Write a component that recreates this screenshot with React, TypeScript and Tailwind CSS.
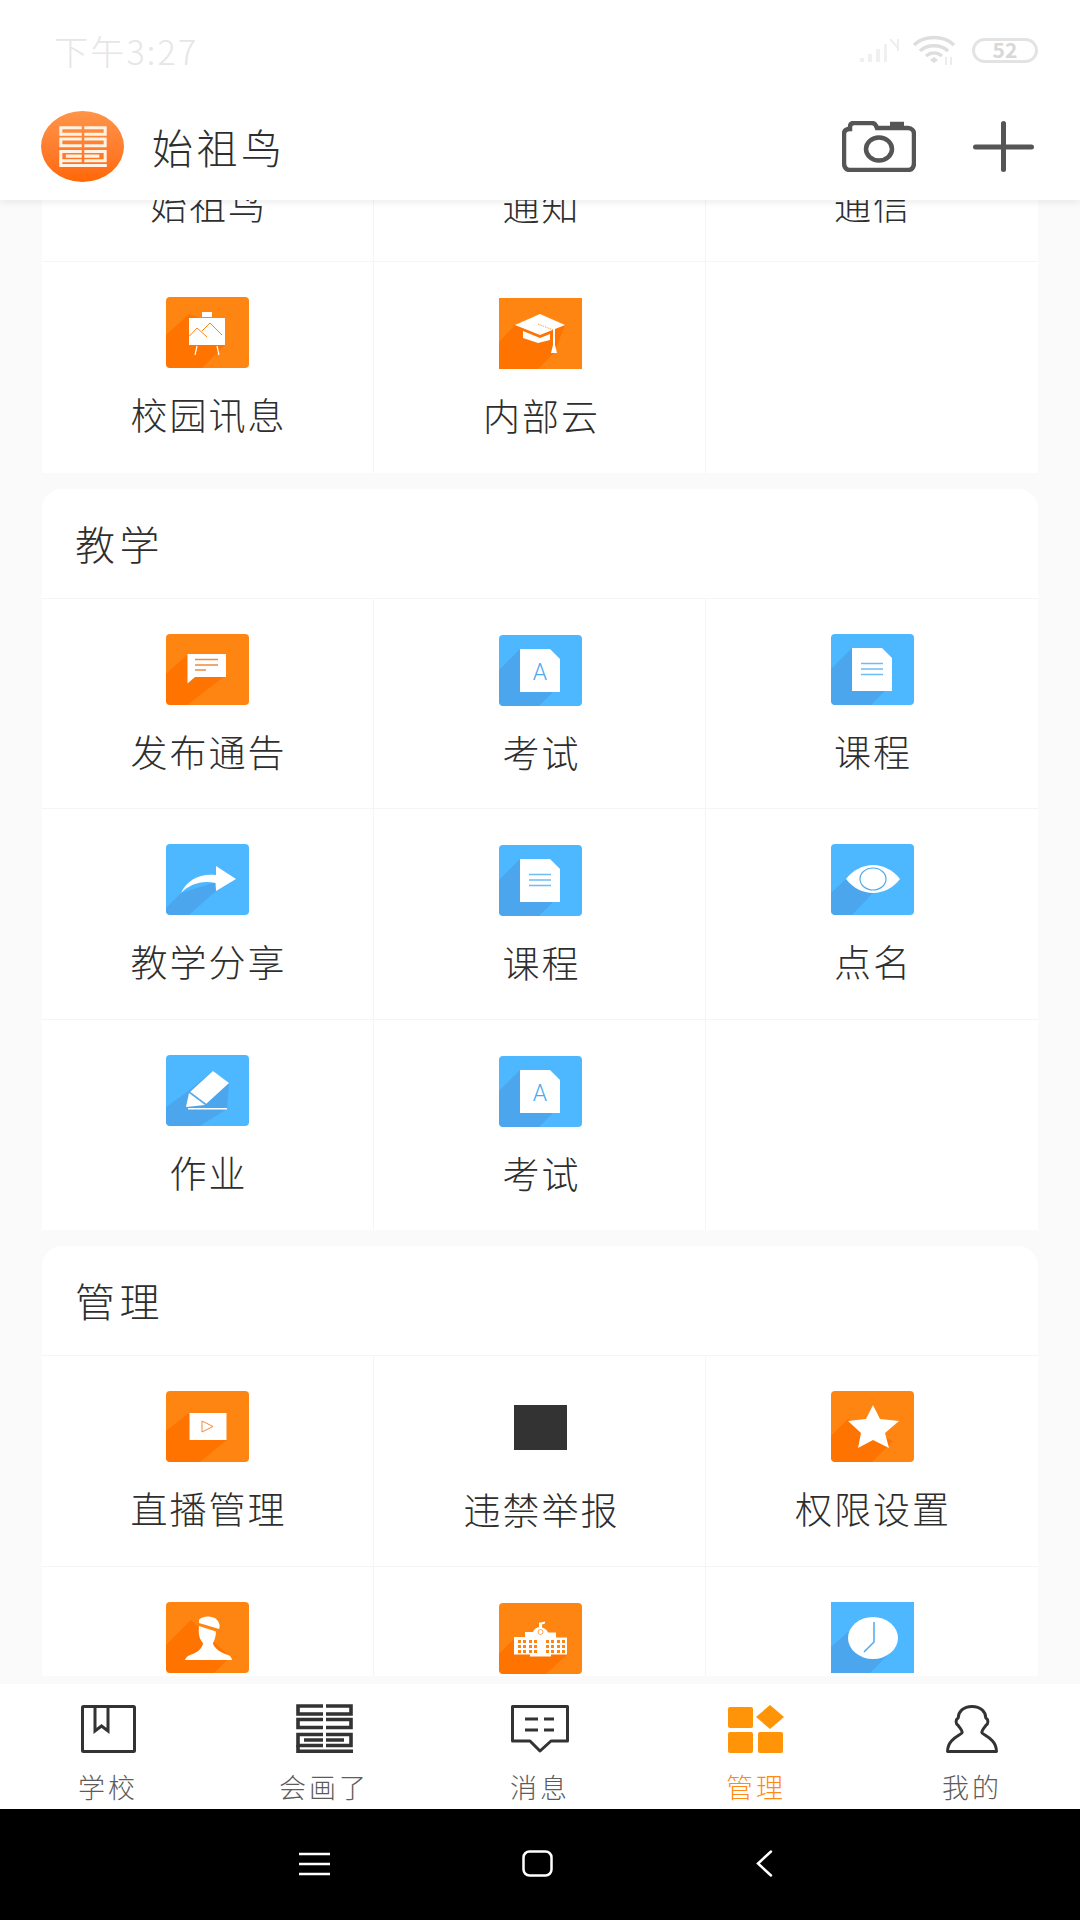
import React from 'react';

const FONT = "font-['Noto_Sans_CJK_SC','Noto_Sans',sans-serif]";

const ORANGE = { bg: '#FF8513', shade: '#FF7300' };
const BLUE = { bg: '#4DB8FF', shade: '#4BA6EE' };

type Tile = {
  label: string;
  tone?: typeof ORANGE;
  shadow?: string;
  square?: boolean;
  glyph: React.ReactNode;
};

// ---------------------------------------------------------------------------
// Glyphs
// ---------------------------------------------------------------------------

const docA = (
  <>
    <path d="M21 14H51L61 24V57H21Z" fill="#fff" />
    <text x="41" y="45" textAnchor="middle" fontSize="23" fontWeight="300" fill="#4DA9EE" fontFamily="Roboto, sans-serif">
      A
    </text>
  </>
);

const docLines = (
  <>
    <path d="M21 14H51L61 24V57H21Z" fill="#fff" />
    <path d="M30 29.500H52M30 35H52M30 40.500H52" stroke="#6DBDF5" strokeWidth="1.500" />
  </>
);

const school = (
  <>
    <path d="M42 19.500l4-1v2l-3 1v3c3 .5 5 2.500 6 5h8v5h11v17H52v2H31v-2H15V34h11v-5h8c1-2.500 3-4.500 6-5v-4.500z" fill="#fff" />
    <circle cx="41.500" cy="29" r="2.500" fill="none" stroke="#FF8513" strokeWidth="0.7" />
    {[19, 24, 30, 35, 47, 52, 58, 63].map((x) =>
      [37, 42, 47].map((y) => <rect key={`${x}-${y}`} x={x} y={y} width="3" height="3" fill="#FF8513" />),
    )}
  </>
);

function LogoMark({ color, className }: { color: string; className: string }) {
  return (
    <svg viewBox="0 0 57 49" fill="none" stroke={color} strokeWidth="3.600" className={className}>
      <path d="M27 2H2V10H27M30 2H55V10H30" />
      <path d="M27 15.500H2V23.500H27M30 15.500H55V23.500H30" />
      <path d="M27 30.500H2V41.500H27M8 36H27M30 30.500H55V41.500H30M30 36H48" />
      <path d="M2 41V47.200H57" />
    </svg>
  );
}

// ---------------------------------------------------------------------------
// Data
// ---------------------------------------------------------------------------

const topTiles: Tile[] = [
  { label: '始祖鸟', glyph: null },
  { label: '通知', glyph: null },
  { label: '通信', glyph: null },
  {
    label: '校园讯息',
    tone: ORANGE,
    shadow: '0,38 23,17 59,30 59,48 36,71 3,71 0,68',
    glyph: (
      <>
        <rect x="36" y="15" width="10" height="5" fill="#fff" />
        <rect x="23" y="21" width="36" height="27" fill="#fff" />
        <path d="M31 49L29 58M51 49L53 58" stroke="#fff" strokeWidth="1.200" />
        <path d="M23.500 39L31 31L41 40M36 34L44 26L56 38" stroke="#FF8513" strokeWidth="1" fill="none" />
      </>
    ),
  },
  {
    label: '内部云',
    tone: ORANGE,
    square: true,
    shadow: '0,44 16,27 66,27 55,55 39,71 0,71',
    glyph: (
      <>
        <path d="M16 27L41 16L66 27L41 37Z" fill="#fff" />
        <path d="M24 33L41 40L51 36V42L39 45L24 40Z" fill="#fff" />
        <path d="M54 31H56V47L58 55H52L54 47Z" fill="#fff" />
        <path d="M39 26L54 32" stroke="#FF8513" strokeWidth="0.800" strokeDasharray="1.500 1" />
      </>
    ),
  },
  { label: '', glyph: null },
];

const teachTiles: Tile[] = [
  {
    label: '发布通告',
    tone: ORANGE,
    shadow: '0,40 22,20 59,42 21,71 3,71 0,68',
    glyph: (
      <>
        <path d="M21.500 20H60V43H29L21.500 49.500Z" fill="#fff" />
        <path d="M29 25.500H52M29 31H52M29 36H40" stroke="#F08A3C" strokeWidth="1.300" />
      </>
    ),
  },
  { label: '考试', tone: BLUE, shadow: '0,35 21,14 61,50 40,71 3,71 0,68', glyph: docA },
  { label: '课程', tone: BLUE, shadow: '0,35 21,14 61,50 40,71 3,71 0,68', glyph: docLines },
  {
    label: '教学分享',
    tone: BLUE,
    shadow: '0,64 15,49 50,38 50,47 23,71 3,71 0,68',
    glyph: <path d="M15 49C21 36 34 29 50 31V22L70 35L50 47L49.500 39C36 36 24 40 15 49Z" fill="#fff" />,
  },
  { label: '课程', tone: BLUE, shadow: '0,35 21,14 61,50 40,71 3,71 0,68', glyph: docLines },
  {
    label: '点名',
    tone: BLUE,
    shadow: '0,49 15,35 42,49 21,71 3,71 0,68',
    glyph: (
      <>
        <path d="M15 35C22 26 32 21 42 21C52 21 62 26 69 35C62 44 52 49 42 49C32 49 22 44 15 35Z" fill="#fff" />
        <ellipse cx="42" cy="35" rx="13" ry="11" fill="#fff" stroke="#4DA9EE" strokeWidth="1.200" />
      </>
    ),
  },
  {
    label: '作业',
    tone: BLUE,
    shadow: '0,52 21,37 47,16 63,28 61,54 34,71 3,71 0,68',
    glyph: (
      <>
        <path d="M47 16L63 28L40 49L24 37Z" fill="#fff" />
        <path d="M23 38L39 50L20 52Z" fill="#fff" />
        <path d="M24 37L40 49" stroke="#6DB0E8" strokeWidth="1" />
        <rect x="22" y="53" width="39" height="1.500" fill="#fff" />
      </>
    ),
  },
  { label: '考试', tone: BLUE, shadow: '0,35 21,14 61,50 40,71 3,71 0,68', glyph: docA },
  { label: '', glyph: null },
];

const manageTiles: Tile[] = [
  {
    label: '直播管理',
    tone: ORANGE,
    shadow: '0,40 23,22 61,49 34,71 3,71 0,68',
    glyph: (
      <>
        <rect x="23.500" y="22" width="37" height="27" fill="#fff" />
        <path d="M36 30L47 35.500L36 41Z" fill="none" stroke="#F08A3C" strokeWidth="1" />
      </>
    ),
  },
  { label: '违禁举报', glyph: <rect x="15" y="13" width="53" height="45" fill="#333" /> },
  {
    label: '权限设置',
    tone: ORANGE,
    shadow: '0,45 17,28 62,50 41,71 3,71 0,68',
    glyph: <path d="M42 14L49 28L68 30L54 42L58 57L42 49L27 57L30 42L17 30L35 28Z" fill="#fff" />,
  },
  {
    label: '',
    tone: ORANGE,
    shadow: '0,43 25,18 64,55 48,71 3,71 0,68',
    glyph: (
      <>
        <path d="M33 18C36 14 46 13 51 18C54 21 54 25 53 27L33 21Z" fill="#fff" />
        <path d="M33 24L50 29.500C50 35 48 39 47 41C47 44 52 50 62 53C65 54 66 57 66 58H19C19 57 21 54 24 53C34 50 37 44 37 41C34 38 32 33 33 24Z" fill="#fff" />
      </>
    ),
  },
  { label: '', tone: ORANGE, shadow: '0,51 15,36 68,52 47,71 3,71 0,68', glyph: school },
  {
    label: '',
    tone: BLUE,
    square: true,
    shadow: '0,45 17,30 60,50 39,71 0,71',
    glyph: (
      <>
        <ellipse cx="42" cy="36" rx="25" ry="21" fill="#fff" />
        <path d="M43 20V40L33 50" fill="none" stroke="#4DA9EE" strokeWidth="1.500" />
      </>
    ),
  },
];

// ---------------------------------------------------------------------------
// Pieces
// ---------------------------------------------------------------------------

function TileIcon({ tile }: { tile: Tile }) {
  const { tone, shadow, glyph, square } = tile;
  return (
    <svg
      viewBox="0 0 83 71"
      className={`h-[71px] w-[83px] overflow-hidden ${square ? '' : 'rounded-[4px]'}`}
    >
      {tone && <rect width="83" height="71" fill={tone.bg} />}
      {tone && shadow && <polygon points={shadow} fill={tone.shade} />}
      {glyph}
    </svg>
  );
}

function TileGrid({ tiles }: { tiles: Tile[] }) {
  const rows = Math.ceil(tiles.length / 3);
  return (
    <div className="grid grid-cols-3">
      {tiles.map((tile, i) => (
        <div
          key={i}
          className={`flex h-[210.5px] flex-col items-center ${i % 3 === 1 ? 'pl-[2px] pt-[36px]' : 'pt-[35px]'} ${
            i % 3 !== 2 ? 'border-r border-[#f5f5f5]' : ''
          } ${Math.floor(i / 3) < rows - 1 ? 'border-b border-[#f5f5f5]' : ''}`}
        >
          {tile.glyph && <TileIcon tile={tile} />}
          {tile.label && (
            <div
              className={`pl-[2px] text-[37px] font-light leading-[50px] tracking-[2px] text-[#2e2e2e] ${
                tile.glyph ? 'mt-[21px]' : 'mt-[92px]'
              }`}
            >
              {tile.label}
            </div>
          )}
        </div>
      ))}
    </div>
  );
}

function Section({ title, tiles }: { title: string; tiles: Tile[] }) {
  return (
    <section className="mt-[16px] overflow-hidden rounded-t-[20px] bg-white">
      <div className="flex h-[110px] items-center border-b border-[#f5f5f5] pb-[1px] pl-[33px] text-[40px] font-light tracking-[4.5px] text-[#2e2e2e]">
        {title}
      </div>
      <TileGrid tiles={tiles} />
    </section>
  );
}

function StatusBar() {
  return (
    <div className="flex h-[100px] items-center justify-between pl-[54px] pr-[42px]">
      <span className="text-[34px] font-light tracking-[2.2px] text-[#e6e6e6]">下午3:27</span>
      <div className="flex items-center">
        <svg viewBox="0 0 40 26" className="h-[26px] w-[40px]">
          <path d="M1 21h4v4H1zM9 17h4v8H9zM17 12h4v13h-4zM25 7h3v18h-3z" fill="#f0f0f0" />
          <path d="M31 2l8 9M39 2v12" stroke="#eeeeee" strokeWidth="2" fill="none" />
        </svg>
        <svg viewBox="0 0 44 30" fill="none" className="ml-[14px] h-[30px] w-[44px]">
          <path d="M1 10C11 0 31 0 41 10M7 16C14 9 28 9 35 16M13 21C18 17 24 17 29 21" stroke="#dedede" strokeWidth="3.500" />
          <path d="M17 25L21 22L25 25L21 28Z" fill="#dedede" />
          <path d="M33 22V30M38 22V30" stroke="#e6e6e6" strokeWidth="1.500" />
        </svg>
        <div className="ml-[15px] flex h-[25px] w-[66px] items-center justify-center rounded-full border-[3px] border-[#e3e3e3] text-[21px] font-bold text-[#d8d8d8]">
          52
        </div>
      </div>
    </div>
  );
}

function TitleBar() {
  return (
    <div className="flex h-[100px] items-center pb-[7px] pl-[41px] pr-[46px]">
      <div className="flex h-[71px] w-[83px] items-center justify-center rounded-[50%] bg-linear-to-b from-[#ff9448] to-[#ff6700]">
        <LogoMark color="#fff3e6" className="h-[41px] w-[48px]" />
      </div>
      <div className="ml-[28px] flex-1 text-[41px] font-light tracking-[3.5px] text-[#2e2e2e]">始祖鸟</div>
      <svg viewBox="0 0 74 51" fill="none" stroke="#555" strokeWidth="4.500" className="h-[51px] w-[74px]">
        <path d="M8 8V6C8 3 10 2 12 2H30C33 2 34 4 35 7H66C70 7 72 10 72 13V42C72 46 70 49 66 49H8C4 49 2 46 2 42V13C2 10 4 8 8 8Z" />
        <ellipse cx="37" cy="28" rx="13" ry="11.500" />
        <path d="M48 3H62" />
      </svg>
      <svg viewBox="0 0 61 51" stroke="#555" strokeWidth="5" strokeLinecap="round" className="ml-[57px] h-[51px] w-[61px]">
        <path d="M30.500 2.500V48.500M2.500 26H58.500" />
      </svg>
    </div>
  );
}

const navItems: { label: string; active?: boolean; icon: React.ReactNode }[] = [
  {
    label: '学校',
    icon: (
      <svg viewBox="0 0 55 48" fill="none" stroke="#333" strokeWidth="3" className="h-[48px] w-[55px]">
        <rect x="1.500" y="1.500" width="52" height="45" rx="1" />
        <path d="M14 1.500V26L20.500 21L27 26V1.500" />
      </svg>
    ),
  },
  { label: '会画了', icon: <LogoMark color="#333" className="h-[49px] w-[57px]" /> },
  {
    label: '消息',
    icon: (
      <svg viewBox="0 0 58 48" fill="none" stroke="#333" strokeWidth="3" className="h-[48px] w-[58px]">
        <path d="M1.500 1.500H56.500V36H40L29 46L19 36H1.500Z" strokeLinejoin="round" />
        <path d="M14 14H27M33 14H43M14 25H27M33 25H43" />
      </svg>
    ),
  },
  {
    label: '管理',
    active: true,
    icon: (
      <svg viewBox="0 0 56 48" fill="#FF9408" className="h-[48px] w-[56px]">
        <rect x="0" y="2" width="25" height="21" rx="2" />
        <path d="M42 0L56 12L42 24L28 12Z" strokeLinejoin="round" />
        <rect x="0" y="27" width="25" height="21" rx="2" />
        <rect x="30" y="27" width="25" height="21" rx="2" />
      </svg>
    ),
  },
  {
    label: '我的',
    icon: (
      <svg viewBox="0 0 54 49" fill="none" stroke="#333" strokeWidth="3" className="h-[48px] w-[54px]">
        <path d="M27 1.500C36 1.500 41 7 41 13C44 15 44 19 41 21C39 24 37 26 37 28C38 31 52 34 52 47.500H2C2 34 16 31 17 28C17 26 15 24 13 21C10 19 10 15 13 13C13 7 18 1.500 27 1.500Z" strokeLinejoin="round" />
      </svg>
    ),
  },
];

function BottomNav() {
  return (
    <nav className="grid h-[125px] grid-cols-5 bg-white">
      {navItems.map((item) => (
        <div key={item.label} className="flex flex-col items-center pt-[20px]">
          <div className="flex h-[49px] items-center">{item.icon}</div>
          <div
            className={`mt-[15px] text-[27px] font-light leading-[38px] tracking-[3px] ${
              item.active ? 'text-[#FF8A14]' : 'text-[#5c5c5c]'
            }`}
          >
            {item.label}
          </div>
        </div>
      ))}
    </nav>
  );
}

function SystemBar() {
  return (
    <div className="flex h-[111px] items-center bg-black pb-[2px] pl-[299px]">
      <svg viewBox="0 0 31 24" stroke="#fff" strokeWidth="2.500" className="h-[24px] w-[31px]">
        <path d="M0 2H31M0 12H31M0 22H31" />
      </svg>
      <svg viewBox="0 0 31 27" fill="none" stroke="#fff" strokeWidth="2.500" className="ml-[192px] h-[27px] w-[31px]">
        <rect x="1.500" y="1.500" width="28" height="24" rx="6" />
      </svg>
      <svg viewBox="0 0 17 27" fill="none" stroke="#fff" strokeWidth="2.500" strokeLinecap="round" className="ml-[203px] h-[27px] w-[17px]">
        <path d="M15 1.500L2 13.500L15 25.500" />
      </svg>
    </div>
  );
}

// ---------------------------------------------------------------------------
// Page
// ---------------------------------------------------------------------------

export default function App() {
  return (
    <div className={`flex h-[1920px] w-[1080px] flex-col overflow-hidden bg-[#fafafa] ${FONT}`}>
      <header className="relative z-10 bg-white shadow-[0_2px_8px_rgba(0,0,0,0.08)]">
        <StatusBar />
        <TitleBar />
      </header>

      <main className="min-h-0 flex-1 pb-[8px]">
        <div className="h-full overflow-hidden px-[42px]">
          <div className="-mt-[148.5px]">
            <section className="bg-white">
              <TileGrid tiles={topTiles} />
            </section>
            <Section title="教学" tiles={teachTiles} />
            <Section title="管理" tiles={manageTiles} />
          </div>
        </div>
      </main>

      <BottomNav />
      <SystemBar />
    </div>
  );
}
